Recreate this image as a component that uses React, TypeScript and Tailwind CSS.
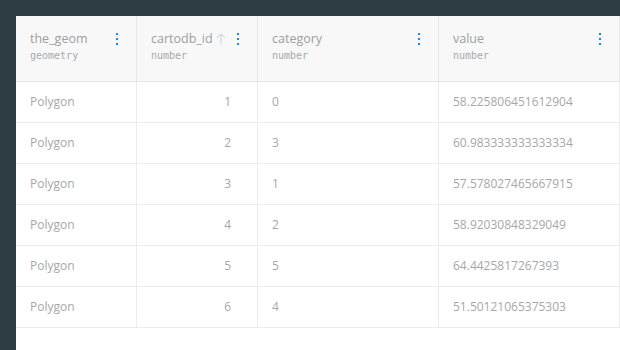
import React from 'react'

type Column = { name: string; type: string; width: string; sorted?: boolean; align: 'left' | 'right' }

const columns: Column[] = [
  { name: 'the_geom', type: 'geometry', width: 'w-[121px]', align: 'left' },
  { name: 'cartodb_id', type: 'number', width: 'w-[121px]', sorted: true, align: 'right' },
  { name: 'category', type: 'number', width: 'w-[181px]', align: 'left' },
  { name: 'value', type: 'number', width: 'w-[181px]', align: 'left' },
]

const rows: string[][] = [
  ['Polygon', '1', '0', '58.225806451612904'],
  ['Polygon', '2', '3', '60.983333333333334'],
  ['Polygon', '3', '1', '57.578027465667915'],
  ['Polygon', '4', '2', '58.92030848329049'],
  ['Polygon', '5', '5', '64.4425817267393'],
  ['Polygon', '6', '4', '51.50121065375303'],
]

const Dots = () => (
  <div className="flex flex-col gap-[3px]">
    <span className="block w-[2px] h-[2px] bg-[#1785fb]" />
    <span className="block w-[2px] h-[2px] bg-[#1785fb]" />
    <span className="block w-[2px] h-[2px] bg-[#1785fb]" />
  </div>
)

// thin up arrow for the sorted column
const SortArrow = () => (
  <svg width="10" height="12" viewBox="0 0 10 12" fill="none" stroke="#cfd1d3" strokeWidth="1">
    <path d="M5 11.5V1" />
    <path d="M1 5L5 1L9 5" />
  </svg>
)

const App = () => {
  return (
    <div className="w-[620px] h-[350px] bg-[#2e3c43] pt-4 pl-4 overflow-hidden" style={{ fontFamily: '"Open Sans", sans-serif' }}>
      <div className="bg-white h-full">
        {/* header */}
        <div className="flex bg-[#f8f8f8] border-b border-[#e6e6e6] h-[66px]">
          {columns.map((col) => (
            <div key={col.name} className={`${col.width} border-r border-[#e6e6e6] flex items-start justify-between pl-[14px] pr-[18px] pt-[14px]`}>
              <div className="flex flex-col">
                <span className="text-[12.5px] leading-[18px] text-[#9c9fa3]">{col.name}</span>
                <span className="text-[10px] leading-[14px] mt-[1px] text-[#a6a9ad]" style={{ fontFamily: '"DejaVu Sans Mono", monospace' }}>{col.type}</span>
              </div>
              <div className="flex items-center gap-[11px] pt-[3px]">
                {col.sorted && <SortArrow />}
                <Dots />
              </div>
            </div>
          ))}
        </div>
        {/* body */}
        {rows.map((row, i) => (
          <div key={i} className="flex h-[41px] border-b border-[#ececec]">
            {row.map((cell, j) => (
              <div
                key={j}
                className={`${columns[j].width} border-r border-[#ececec] flex items-center text-[12px] text-[#a5a8ab] ${columns[j].align === 'right' ? 'justify-end pr-[26px]' : 'pl-[14px]'}`}
              >
                {cell}
              </div>
            ))}
          </div>
        ))}
      </div>
    </div>
  )
}

export default App
